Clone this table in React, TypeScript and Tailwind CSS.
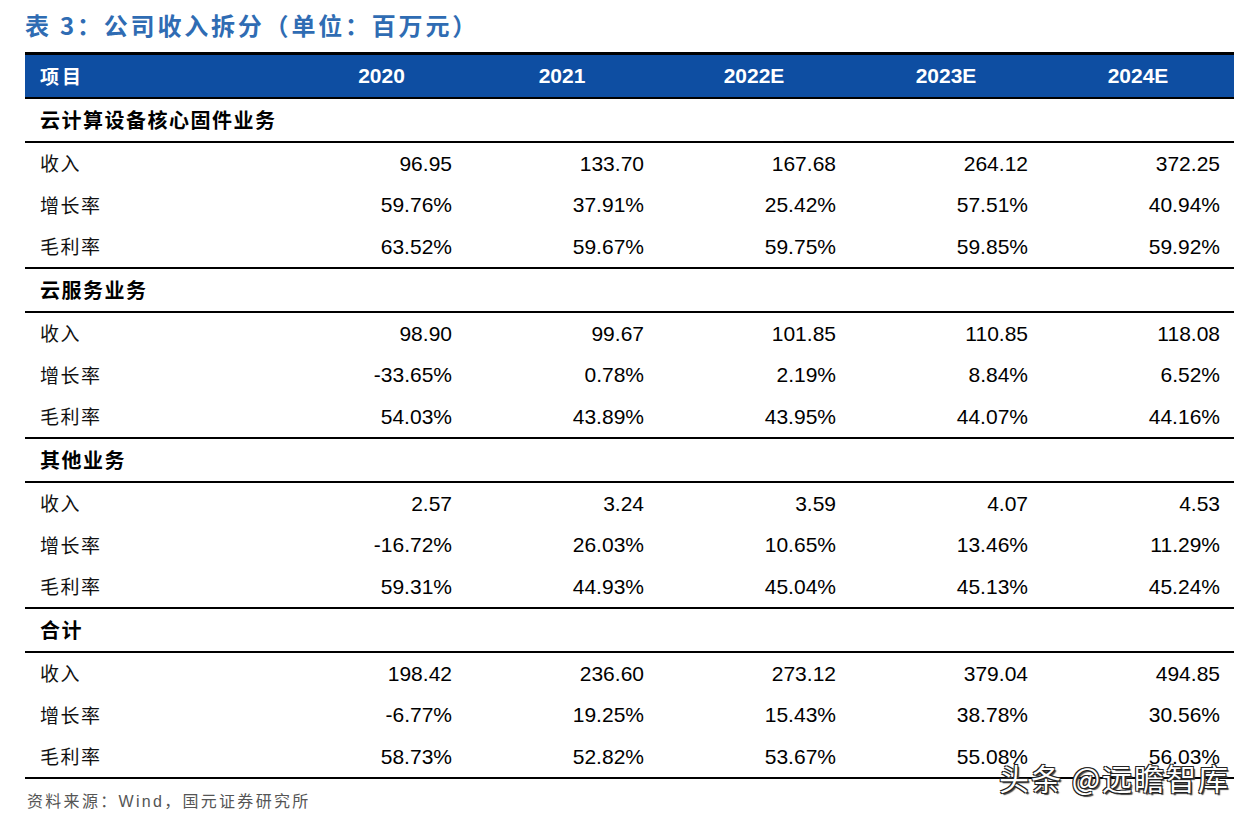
const YEARS = ['2020', '2021', '2022E', '2023E', '2024E'];

interface Section {
  title: string;
  rows: { label: string; values: string[] }[];
}

const SECTIONS: Section[] = [
  {
    title: '云计算设备核心固件业务',
    rows: [
      { label: '收入', values: ['96.95', '133.70', '167.68', '264.12', '372.25'] },
      { label: '增长率', values: ['59.76%', '37.91%', '25.42%', '57.51%', '40.94%'] },
      { label: '毛利率', values: ['63.52%', '59.67%', '59.75%', '59.85%', '59.92%'] },
    ],
  },
  {
    title: '云服务业务',
    rows: [
      { label: '收入', values: ['98.90', '99.67', '101.85', '110.85', '118.08'] },
      { label: '增长率', values: ['-33.65%', '0.78%', '2.19%', '8.84%', '6.52%'] },
      { label: '毛利率', values: ['54.03%', '43.89%', '43.95%', '44.07%', '44.16%'] },
    ],
  },
  {
    title: '其他业务',
    rows: [
      { label: '收入', values: ['2.57', '3.24', '3.59', '4.07', '4.53'] },
      { label: '增长率', values: ['-16.72%', '26.03%', '10.65%', '13.46%', '11.29%'] },
      { label: '毛利率', values: ['59.31%', '44.93%', '45.04%', '45.13%', '45.24%'] },
    ],
  },
  {
    title: '合计',
    rows: [
      { label: '收入', values: ['198.42', '236.60', '273.12', '379.04', '494.85'] },
      { label: '增长率', values: ['-6.77%', '19.25%', '15.43%', '38.78%', '30.56%'] },
      { label: '毛利率', values: ['58.73%', '52.82%', '53.67%', '55.08%', '56.03%'] },
    ],
  },
];

const CJK = "font-['Noto_Sans_CJK_SC',sans-serif]";
const NUM = "font-['Liberation_Sans','Noto_Sans_CJK_SC',sans-serif]";

// 每行高度：41 / 42 / 43（最后一行含底线）
const ROW_H = ['h-[41px]', 'h-[42px]', 'h-[43px] border-b-2 border-black'];

function DataRow({ label, values, idx }: { label: string; values: string[]; idx: number }) {
  return (
    <div className={`flex items-center ${ROW_H[idx]}`}>
      <div className={`w-[249px] pl-[15px] text-[19px] tracking-[1.5px] text-[#111] ${CJK}`}>
        {label}
      </div>
      {values.map((v, i) => (
        <div key={i} className={`w-[192px] pr-[14px] text-right text-[21px] text-black ${NUM}`}>
          {v}
        </div>
      ))}
    </div>
  );
}

export default function App() {
  return (
    <div className="relative h-[817px] w-[1253px] bg-white">
      <div className="pl-[25px] pr-[19px]">
        <h1
          className={`flex h-[52px] items-center pb-[2px] text-[24px] font-bold tracking-[2.8px] text-[#2f6cb3] ${CJK}`}
        >
          表 3：公司收入拆分（单位：百万元）
        </h1>

        <div className="border-t-[3px] border-black">
          <div className="flex h-[44px] items-center border-b-2 border-black bg-[#0e4ea2] text-white">
            <div className={`w-[249px] pl-[15px] text-[19px] font-bold tracking-[3px] ${CJK}`}>项目</div>
            {YEARS.map((y, i) => (
              <div
                key={y}
                className={`w-[192px] text-center text-[21px] font-bold ${NUM} ${i === 0 ? 'pl-[23px]' : ''}`}
              >
                {y}
              </div>
            ))}
          </div>

          {SECTIONS.map((s) => (
            <div key={s.title}>
              <div
                className={`flex h-[44px] items-center border-b-2 border-black pl-[15px] text-[20px] font-bold tracking-[1.5px] text-black ${CJK}`}
              >
                {s.title}
              </div>
              {s.rows.map((r, i) => (
                <DataRow key={r.label} label={r.label} values={r.values} idx={i} />
              ))}
            </div>
          ))}
        </div>

        <div className={`pt-[9px] pl-[2px] text-[16px] tracking-[2.3px] text-[#555] ${CJK}`}>
          资料来源：<span className={NUM}>Wind</span>，国元证券研究所
        </div>
      </div>

      <div
        className={`absolute left-[999px] top-[757px] text-[30px] leading-[40px] tracking-[2px] text-white ${CJK} [text-shadow:1px_1px_0_#222,-1px_-1px_0_#222,1px_-1px_0_#222,-1px_1px_0_#222,2px_2px_1px_#444]`}
      >
        头条 @远瞻智库
      </div>
    </div>
  );
}
